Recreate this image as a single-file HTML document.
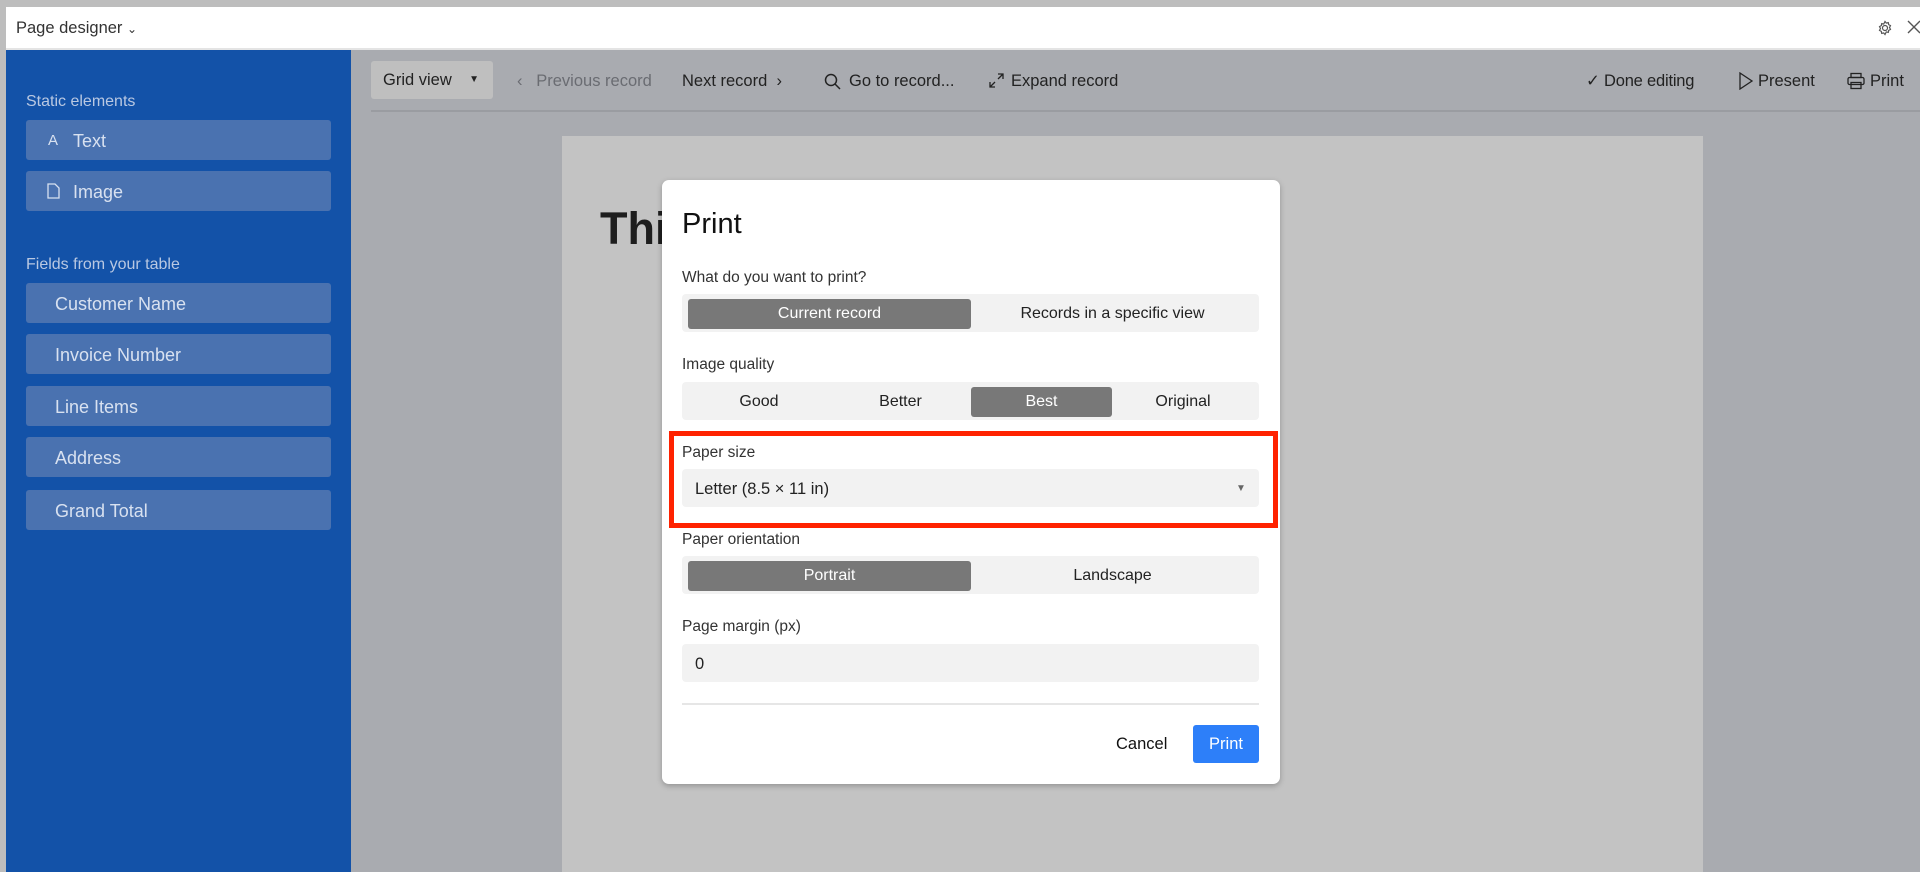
<!DOCTYPE html>
<html><head><meta charset="utf-8"><style>
*{box-sizing:border-box;margin:0;padding:0}
body{width:1920px;height:872px;overflow:hidden;background:#bdbdbd;font-family:"Liberation Sans",sans-serif;position:relative}
.abs{position:absolute}
.hdr{left:6px;top:7px;width:1914px;height:43px;background:#fff;border-bottom:2px solid #e4e4e4}
.side{left:6px;top:50px;width:345px;height:822px;background:#1352a8}
.main{left:351px;top:50px;width:1569px;height:822px;background:#a9abb0}
.sl{color:#b9c8e2;font-size:16px}
.sb{left:26px;width:305px;height:40px;background:#4a72b0;border-radius:3px;color:#d8e1f0;font-size:18px;line-height:42px;padding-left:29px}
.tb{font-size:16.5px;color:#222;top:71px;line-height:20px}
.lbl{left:682px;font-size:15.5px;color:#333}
.seg{left:682px;width:577px;height:38px;background:#f2f2f2;border-radius:4px}
.opt{font-size:16px;color:#222;text-align:center;line-height:30px}
.sel{background:#787878;color:#fff;border-radius:3px}
</style></head><body>
<div class="abs hdr"></div>
<div class="abs" style="left:16px;top:19px;font-size:16.5px;color:#333">Page designer <span style="font-size:12px">&#8964;</span></div>
<svg class="abs" style="left:1876px;top:19px" width="18" height="18" viewBox="0 0 18 18" fill="none" stroke="#555" stroke-width="1.2"><circle cx="9" cy="9" r="2.5"/><path d="M9 2.5l1.3 1.6 2-.5.4 2 1.8 1-1 1.9 1 1.9-1.8 1-.4 2-2-.5L9 15.5l-1.3-1.6-2 .5-.4-2-1.8-1 1-1.9-1-1.9 1.8-1 .4-2 2 .5z"/></svg>
<svg class="abs" style="left:1907px;top:20px" width="14" height="14" fill="none" stroke="#555" stroke-width="1.4"><path d="M1 1l12 12M13 1L1 13"/></svg>
<div class="abs side"></div>
<div class="abs sl" style="left:26px;top:93px">Static elements</div>
<div class="abs sb" style="top:120px"><span style="position:absolute;left:22px;font-size:15px">A</span><span style="margin-left:18px">Text</span></div>
<div class="abs sb" style="top:171px"><svg style="position:absolute;left:21px;top:12px" width="13" height="16" fill="none" stroke="#d8e1f0" stroke-width="1.3"><path d="M1 1h7l4 4v10H1z"/></svg><span style="margin-left:18px">Image</span></div>
<div class="abs sl" style="left:26px;top:256px">Fields from your table</div>
<div class="abs sb" style="top:283px">Customer Name</div>
<div class="abs sb" style="top:334px">Invoice Number</div>
<div class="abs sb" style="top:386px">Line Items</div>
<div class="abs sb" style="top:437px">Address</div>
<div class="abs sb" style="top:490px">Grand Total</div>
<div class="abs main"></div>
<div class="abs" style="left:371px;top:61px;width:122px;height:38px;background:#bfbfbf;border-radius:3px;font-size:16.5px;color:#222;line-height:38px;padding-left:12px">Grid view <span style="position:absolute;right:14px;font-size:10px">&#9660;</span></div>
<div class="abs tb" style="left:517px;color:#6a6c72">&#8249;&nbsp;&nbsp; Previous record</div>
<div class="abs tb" style="left:682px">Next record &nbsp;&#8250;</div>
<svg class="abs" style="left:824px;top:73px" width="17" height="17" fill="none" stroke="#222" stroke-width="1.5"><circle cx="7" cy="7" r="5.5"/><path d="M11 11l5 5"/></svg>
<div class="abs tb" style="left:849px">Go to record...</div>
<svg class="abs" style="left:989px;top:73px" width="15" height="15" fill="none" stroke="#222" stroke-width="1.3"><path d="M9 1h5v5M14 1L9 6M6 14H1V9M1 14l5-5"/></svg>
<div class="abs tb" style="left:1011px">Expand record</div>
<div class="abs tb" style="left:1586px;letter-spacing:-0.2px">&#10003; Done editing</div>
<svg class="abs" style="left:1738px;top:72px" width="16" height="18" fill="none" stroke="#222" stroke-width="1.3"><path d="M2 1l12 8-12 8z"/></svg>
<div class="abs tb" style="left:1758px">Present</div>
<svg class="abs" style="left:1847px;top:72px" width="18" height="18" fill="none" stroke="#222" stroke-width="1.3"><rect x="4" y="1.5" width="10" height="4"/><rect x="1" y="5.5" width="16" height="7" rx="1.5"/><rect x="4" y="10.5" width="10" height="6"/></svg>
<div class="abs tb" style="left:1870px">Print</div>
<div class="abs" style="left:371px;top:110px;width:1549px;height:2px;background:#9a9ca1"></div>
<div class="abs" style="left:562px;top:136px;width:1141px;height:736px;background:#c3c3c3"></div>
<div class="abs" style="left:600px;top:203px;font-size:45px;font-weight:bold;color:#1e1e1e">Thi</div>
<div class="abs" style="left:662px;top:180px;width:618px;height:604px;background:#fff;border-radius:7px;box-shadow:0 2px 6px rgba(0,0,0,.25)"></div>
<div class="abs" style="left:682px;top:208px;font-size:29px;color:#111">Print</div>
<div class="abs lbl" style="top:269px">What do you want to print?</div>
<div class="abs seg" style="top:294px"></div>
<div class="abs opt sel" style="left:688px;top:299px;width:283px">Current record</div>
<div class="abs opt" style="left:971px;top:299px;width:283px">Records in a specific view</div>
<div class="abs lbl" style="top:356px">Image quality</div>
<div class="abs seg" style="top:382px"></div>
<div class="abs opt" style="left:688px;top:387px;width:142px">Good</div>
<div class="abs opt" style="left:830px;top:387px;width:141px">Better</div>
<div class="abs opt sel" style="left:971px;top:387px;width:141px">Best</div>
<div class="abs opt" style="left:1112px;top:387px;width:142px">Original</div>
<div class="abs" style="left:669px;top:431px;width:609px;height:97px;border:5px solid #ff2200"></div>
<div class="abs lbl" style="top:444px">Paper size</div>
<div class="abs seg" style="top:469px"></div>
<div class="abs" style="left:695px;top:480px;font-size:16.5px;color:#222">Letter (8.5 × 11 in)</div>
<div class="abs" style="left:1236px;top:483px;font-size:10px;color:#666">&#9660;</div>
<div class="abs lbl" style="top:531px">Paper orientation</div>
<div class="abs seg" style="top:556px"></div>
<div class="abs opt sel" style="left:688px;top:561px;width:283px">Portrait</div>
<div class="abs opt" style="left:971px;top:561px;width:283px">Landscape</div>
<div class="abs lbl" style="top:618px">Page margin (px)</div>
<div class="abs seg" style="top:644px"></div>
<div class="abs" style="left:695px;top:655px;font-size:16.5px;color:#222">0</div>
<div class="abs" style="left:682px;top:703px;width:577px;height:2px;background:#e6e6e6"></div>
<div class="abs" style="left:1116px;top:735px;font-size:16.5px;color:#111">Cancel</div>
<div class="abs" style="left:1193px;top:725px;width:66px;height:38px;background:#2d7ff9;border-radius:3px;color:#fff;font-size:16.5px;text-align:center;line-height:39px">Print</div>
</body></html>
